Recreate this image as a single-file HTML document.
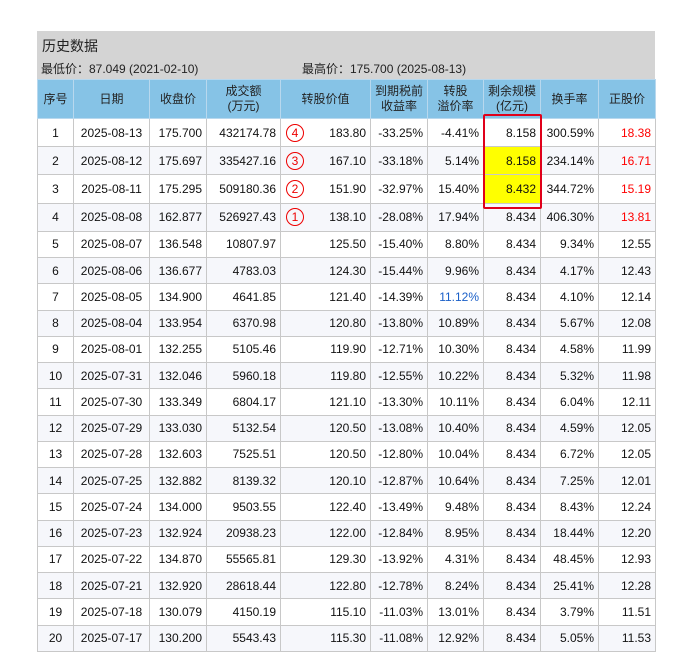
<!DOCTYPE html>
<html><head><meta charset="utf-8"><style>
body{margin:0;background:#fff;width:683px;height:652px;overflow:hidden;font-family:"Liberation Sans","Noto Sans CJK SC",sans-serif;}
#wrap{position:absolute;left:37px;top:31px;width:618px;}
.top{background:#d4d4d4;height:48px;position:relative;color:#222;}
.top .t{position:absolute;left:5px;top:5px;font-size:14px;}
.top .l{position:absolute;left:4px;top:29px;font-size:12px;}
.top .h{position:absolute;left:265px;top:29px;font-size:12px;}
table{border-collapse:collapse;table-layout:fixed;width:618px;font-size:12px;color:#111;}
td,th{border:1px solid #c8c8c8;padding:0 4px;white-space:nowrap;}
th{background:#86c3e6;font-weight:normal;height:38px;line-height:15px;color:#222;border-color:#b8d8ee;}
td{text-align:right;}
tr.a{height:28.2px;}
tr.n{height:26.25px;}
td.c{text-align:center;}
tr:nth-child(odd) td{background:#f6f7fb;}
tr:nth-child(even) td{background:#fff;}
td.y{background:#ffff00 !important;}
td.r{color:#f00;}
.b{color:#1a5fc8;}
.f{display:flex;justify-content:space-between;align-items:center;}
.cir{width:16px;height:16px;border:1.3px solid #e00;border-radius:50%;color:#e00;text-align:center;line-height:16px;font-size:12px;margin-left:1px;}
#box{position:absolute;left:483px;top:114px;width:55px;height:91px;border:2px solid #e0001a;border-radius:2px;}
</style></head><body>
<div id="wrap">
<div class="top"><span class="t">历史数据</span><span class="l">最低价：87.049 (2021-02-10)</span><span class="h">最高价：175.700 (2025-08-13)</span></div>
<table>
<colgroup><col style="width:36px"><col style="width:76px"><col style="width:57px"><col style="width:74px"><col style="width:90px"><col style="width:57px"><col style="width:56px"><col style="width:57px"><col style="width:58px"><col style="width:57px"></colgroup>
<tr><th>序号</th><th>日期</th><th>收盘价</th><th>成交额<br>(万元)</th><th>转股价值</th><th>到期税前<br>收益率</th><th>转股<br>溢价率</th><th>剩余规模<br>(亿元)</th><th>换手率</th><th>正股价</th></tr>
<tr class="a"><td class="c">1</td><td class="c">2025-08-13</td><td>175.700</td><td>432174.78</td><td><div class="f"><span class="cir">4</span><span>183.80</span></div></td><td>-33.25%</td><td>-4.41%</td><td>8.158</td><td>300.59%</td><td class="r">18.38</td></tr>
<tr class="a"><td class="c">2</td><td class="c">2025-08-12</td><td>175.697</td><td>335427.16</td><td><div class="f"><span class="cir">3</span><span>167.10</span></div></td><td>-33.18%</td><td>5.14%</td><td class="y">8.158</td><td>234.14%</td><td class="r">16.71</td></tr>
<tr class="a"><td class="c">3</td><td class="c">2025-08-11</td><td>175.295</td><td>509180.36</td><td><div class="f"><span class="cir">2</span><span>151.90</span></div></td><td>-32.97%</td><td>15.40%</td><td class="y">8.432</td><td>344.72%</td><td class="r">15.19</td></tr>
<tr class="a"><td class="c">4</td><td class="c">2025-08-08</td><td>162.877</td><td>526927.43</td><td><div class="f"><span class="cir">1</span><span>138.10</span></div></td><td>-28.08%</td><td>17.94%</td><td>8.434</td><td>406.30%</td><td class="r">13.81</td></tr>
<tr class="n"><td class="c">5</td><td class="c">2025-08-07</td><td>136.548</td><td>10807.97</td><td>125.50</td><td>-15.40%</td><td>8.80%</td><td>8.434</td><td>9.34%</td><td>12.55</td></tr>
<tr class="n"><td class="c">6</td><td class="c">2025-08-06</td><td>136.677</td><td>4783.03</td><td>124.30</td><td>-15.44%</td><td>9.96%</td><td>8.434</td><td>4.17%</td><td>12.43</td></tr>
<tr class="n"><td class="c">7</td><td class="c">2025-08-05</td><td>134.900</td><td>4641.85</td><td>121.40</td><td>-14.39%</td><td class="b">11.12%</td><td>8.434</td><td>4.10%</td><td>12.14</td></tr>
<tr class="n"><td class="c">8</td><td class="c">2025-08-04</td><td>133.954</td><td>6370.98</td><td>120.80</td><td>-13.80%</td><td>10.89%</td><td>8.434</td><td>5.67%</td><td>12.08</td></tr>
<tr class="n"><td class="c">9</td><td class="c">2025-08-01</td><td>132.255</td><td>5105.46</td><td>119.90</td><td>-12.71%</td><td>10.30%</td><td>8.434</td><td>4.58%</td><td>11.99</td></tr>
<tr class="n"><td class="c">10</td><td class="c">2025-07-31</td><td>132.046</td><td>5960.18</td><td>119.80</td><td>-12.55%</td><td>10.22%</td><td>8.434</td><td>5.32%</td><td>11.98</td></tr>
<tr class="n"><td class="c">11</td><td class="c">2025-07-30</td><td>133.349</td><td>6804.17</td><td>121.10</td><td>-13.30%</td><td>10.11%</td><td>8.434</td><td>6.04%</td><td>12.11</td></tr>
<tr class="n"><td class="c">12</td><td class="c">2025-07-29</td><td>133.030</td><td>5132.54</td><td>120.50</td><td>-13.08%</td><td>10.40%</td><td>8.434</td><td>4.59%</td><td>12.05</td></tr>
<tr class="n"><td class="c">13</td><td class="c">2025-07-28</td><td>132.603</td><td>7525.51</td><td>120.50</td><td>-12.80%</td><td>10.04%</td><td>8.434</td><td>6.72%</td><td>12.05</td></tr>
<tr class="n"><td class="c">14</td><td class="c">2025-07-25</td><td>132.882</td><td>8139.32</td><td>120.10</td><td>-12.87%</td><td>10.64%</td><td>8.434</td><td>7.25%</td><td>12.01</td></tr>
<tr class="n"><td class="c">15</td><td class="c">2025-07-24</td><td>134.000</td><td>9503.55</td><td>122.40</td><td>-13.49%</td><td>9.48%</td><td>8.434</td><td>8.43%</td><td>12.24</td></tr>
<tr class="n"><td class="c">16</td><td class="c">2025-07-23</td><td>132.924</td><td>20938.23</td><td>122.00</td><td>-12.84%</td><td>8.95%</td><td>8.434</td><td>18.44%</td><td>12.20</td></tr>
<tr class="n"><td class="c">17</td><td class="c">2025-07-22</td><td>134.870</td><td>55565.81</td><td>129.30</td><td>-13.92%</td><td>4.31%</td><td>8.434</td><td>48.45%</td><td>12.93</td></tr>
<tr class="n"><td class="c">18</td><td class="c">2025-07-21</td><td>132.920</td><td>28618.44</td><td>122.80</td><td>-12.78%</td><td>8.24%</td><td>8.434</td><td>25.41%</td><td>12.28</td></tr>
<tr class="n"><td class="c">19</td><td class="c">2025-07-18</td><td>130.079</td><td>4150.19</td><td>115.10</td><td>-11.03%</td><td>13.01%</td><td>8.434</td><td>3.79%</td><td>11.51</td></tr>
<tr class="n"><td class="c">20</td><td class="c">2025-07-17</td><td>130.200</td><td>5543.43</td><td>115.30</td><td>-11.08%</td><td>12.92%</td><td>8.434</td><td>5.05%</td><td>11.53</td></tr>
</table>
</div>
<div id="box"></div>
</body></html>
